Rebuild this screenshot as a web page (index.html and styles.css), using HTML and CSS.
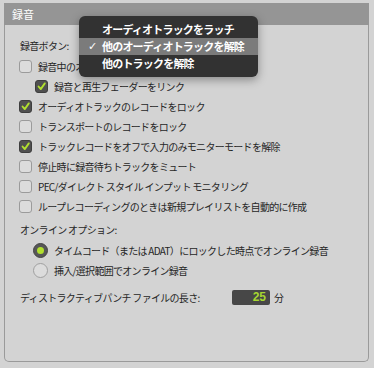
FILE: index.html
```html
<!DOCTYPE html>
<html>
	<head>
		<meta charset="UTF-8">
		<title>録音</title>
		<link rel="stylesheet" href="styles.css">
	</head>
	<body>
		<div class="panel">
			<div class="panel-head">録音</div>
			<div class="panel-body">
				<div class="label">録音ボタン:</div>

				<div class="row"><span class="check"></span>録音中のオーディオトラックをラッチ</div>
				<div class="row sub"><span class="check on"><svg viewBox="0 0 13 13"><path d="M3 6.5 L5.6 9.6 L10.4 2.8"/></svg></span>録音と再生フェーダーをリンク</div>
				<div class="row"><span class="check on"><svg viewBox="0 0 13 13"><path d="M3 6.5 L5.6 9.6 L10.4 2.8"/></svg></span>オーディオトラックのレコードをロック</div>
				<div class="row"><span class="check"></span>トランスポートのレコードをロック</div>
				<div class="row"><span class="check on"><svg viewBox="0 0 13 13"><path d="M3 6.5 L5.6 9.6 L10.4 2.8"/></svg></span>トラックレコードをオフで入力のみモニターモードを解除</div>
				<div class="row"><span class="check"></span>停止時に録音待ちトラックをミュート</div>
				<div class="row"><span class="check"></span>PEC/ダイレクト スタイル インプット モニタリング</div>
				<div class="row"><span class="check"></span>ループレコーディングのときは新規プレイリストを自動的に作成</div>

				<div class="label gap">オンライン オプション:</div>
				<div class="row sub"><span class="radio on"></span>タイムコード（または ADAT）にロックした時点でオンライン録音</div>
				<div class="row sub"><span class="radio"></span>挿入/選択範囲でオンライン録音</div>

				<div class="field-row">
					<span class="field-label">ディストラクティブパンチ ファイルの長さ:</span>
					<span class="field">25</span>
					<span class="unit">分</span>
				</div>
			</div>
		</div>

		<!-- 録音ボタンのポップアップメニュー -->
		<ul class="menu">
			<li>オーディオトラックをラッチ</li>
			<li class="current"><span class="tick">✓</span>他のオーディオトラックを解除</li>
			<li>他のトラックを解除</li>
		</ul>
	</body>
</html>
```

FILE: styles.css
```css
*{
	margin: 0;
	padding: 0;
}
body{
	background-color: #d3d3d3;
	font-family: "Noto Sans CJK JP", "Liberation Sans", sans-serif;
	font-size: 10px;
	color: #262626;
	position: relative;
	width: 374px;
	height: 368px;
	overflow: hidden;
}
.panel{
	margin: 3px 0 0 4px;
	width: 365px;
	height: 359px;
	border: 1px solid #9a9a9a;
	border-top: none;
	border-radius: 0 0 5px 5px;
	box-sizing: border-box;
}
.panel-head{
	height: 22px;
	line-height: 22px;
	margin: 0 -1px;
	padding-left: 8px;
	background-color: #959595;
	color: #fff;
	font-size: 11px;
}
.panel-body{
	padding: 11px 14px 0 14px;
}
.label{
	height: 20px;
	line-height: 20px;
	padding-left: 1px;
	letter-spacing: -0.7px;
}
.label.gap{
	margin-top: 4px;
}
.row{
	display: flex;
	align-items: center;
	height: 20px;
	letter-spacing: -0.7px;
}
.row.sub{
	padding-left: 16px;
}
.check{
	width: 13px;
	height: 13px;
	box-sizing: border-box;
	border: 1px solid #9b9b9b;
	border-radius: 3px;
	background-color: #dcdcdc;
	margin-right: 6px;
	flex-shrink: 0;
}
.check.on{
	background-color: #505050;
	border-color: #3e3e3e;
}
.check svg{
	display: block;
	width: 11px;
	height: 11px;
}
.check svg path{
	fill: none;
	stroke: #b2e02e;
	stroke-width: 2.2;
	stroke-linecap: round;
	stroke-linejoin: round;
}
.row.sub .radio{
	margin-left: -2px;
}
.radio{
	width: 15px;
	height: 15px;
	box-sizing: border-box;
	border: 1px solid #a0a0a0;
	border-radius: 50%;
	background-color: #dcdcdc;
	margin-right: 6px;
	flex-shrink: 0;
	position: relative;
}
.radio.on{
	background-color: #575757;
	border-color: #444;
}
.radio.on::after{
	content: "";
	position: absolute;
	left: 3px;
	top: 3px;
	width: 7px;
	height: 7px;
	border-radius: 50%;
	background-color: #b2e02e;
}
.field-row{
	display: flex;
	align-items: center;
	height: 20px;
	margin-top: 7px;
	letter-spacing: -0.7px;
}
.field-label{
	width: 212px;
	padding-left: 1px;
}
.field{
	width: 38px;
	height: 15px;
	line-height: 15px;
	box-sizing: border-box;
	padding-right: 4px;
	text-align: right;
	background-color: #474747;
	border-radius: 2px;
	color: #a6d630;
	font-family: "Liberation Sans", sans-serif;
	font-weight: bold;
	font-size: 12px;
	letter-spacing: 0;
}
.unit{
	margin-left: 4px;
}
.menu{
	position: absolute;
	left: 79px;
	top: 16px;
	width: 179px;
	padding: 5px 0;
	list-style: none;
	background-color: #323232;
	border-radius: 6px;
	box-shadow: 0 3px 10px rgba(0, 0, 0, 0.35);
	box-sizing: border-box;
}
.menu li{
	position: relative;
	height: 17px;
	line-height: 17px;
	padding-left: 23px;
	color: #fff;
	font-size: 11px;
	font-weight: bold;
	letter-spacing: -0.8px;
}
.menu li.current{
	background-color: #7b7b7b;
}
.menu .tick{
	position: absolute;
	left: 9px;
	top: 0;
	font-family: "DejaVu Sans", sans-serif;
	font-size: 11px;
	font-weight: bold;
}
```
